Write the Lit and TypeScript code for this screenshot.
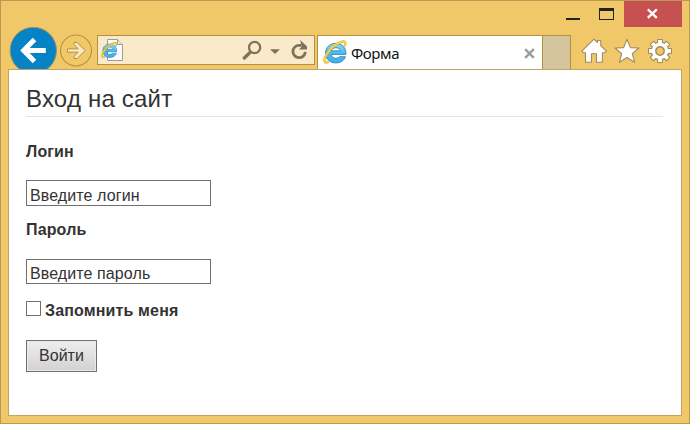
import { LitElement, html, css, svg } from "lit";
import { customElement } from "lit/decorators.js";

const ieGlyph = svg`
  <defs>
    <linearGradient id="e" x1="0" y1="0" x2="0" y2="1">
      <stop offset="0" stop-color="#8edcfb"/>
      <stop offset=".5" stop-color="#4fb9ea"/>
      <stop offset="1" stop-color="#45aee6"/>
    </linearGradient>
  </defs>
  <path fill-rule="evenodd" fill="url(#e)" stroke="#2482bb" stroke-width=".8"
    d="M22 13.800H8.100c.2 2.400 1.800 3.700 4.100 3.700 1.700 0 2.900-.5 3.600-1.500h5.700c-1.400 3.800-4.600 6-9.200 6C6.500 22 2.500 18.200 2.500 12.600S6.500 3.200 12.200 3.200c6 0 10 4.200 9.800 10.600zM8.200 10.400h8.200c-.3-1.900-1.800-3-4.100-3s-3.800 1.100-4.100 3z"/>
  <path fill="none" stroke="#e9a912" stroke-width="2.300" stroke-linecap="round"
    d="M4.500 21.300C1.300 22.600.4 19.400 2.800 15 6.200 9 12.500 3.800 17.500 1.900c3.500-1.300 4.600.3 3.500 3.300"/>
  <path fill="none" stroke="#fdd755" stroke-width="1.300" stroke-linecap="round"
    d="M4.500 21.300C1.300 22.600.4 19.400 2.800 15 6.200 9 12.500 3.800 17.500 1.900c3.500-1.300 4.600.3 3.500 3.300"/>`;

const gearTeeth = [0, 45, 90, 135];

@customElement("browser-toolbar")
export class BrowserToolbar extends LitElement {
  static styles = css`
    :host { display: block; height: 68px; color: #111; }
    svg { display: block; flex: none; }
    .title { display: flex; justify-content: flex-end; height: 26px; }
    .caption { width: 96px; }
    .close { width: 58px; background: #c75050; margin-right: 7px; }
    .nav { display: flex; align-items: flex-start; height: 42px; padding-left: 8px; }
    .address {
      box-sizing: border-box; display: flex; align-items: flex-start;
      width: 218px; height: 30px; margin: 8px 2px 0 3px;
      border: 1px solid #b3923f; background: #faeaca;
    }
    .page { margin: 2px 0 0 2px; }
    .tools { margin-left: auto; }
    .tab {
      box-sizing: border-box; display: flex; width: 226px; height: 34px; margin-top: 8px;
      border: 1px solid #b3923f; border-bottom: 0; background: #fff;
      font: 15px/34px "Noto Sans", "Open Sans", sans-serif;
    }
    .logo { margin: 4px 3px 0 5px; }
    .name { margin-left: 1px; letter-spacing: -0.4px; }
    .x { margin: 12px 7px 0 auto; }
    .newtab {
      box-sizing: border-box; width: 28px; height: 34px; margin-top: 8px;
      border: 1px solid #b3923f; border-width: 1px 1px 0 0; background: #d5c59e;
    }
    .actions { margin: 10px 0 0 9px; }
  `;
  render() {
    return html`
      <div class="title">
        <svg class="caption" height="26" viewBox="528 1 96 26">
          <path fill="#222" d="M566 18h14v2h-14z"/>
          <path fill="#222" fill-rule="evenodd" d="M599 8h15v12h-15zM600 11v8h13v-8z"/>
        </svg>
        <svg class="close" height="26" viewBox="624 1 58 26">
          <path d="M647.800 9.300l9 8.600M656.800 9.300l-9 8.600" stroke="#fff" stroke-width="2.300"/>
        </svg>
      </div>
      <div class="nav">
        <svg width="85" height="42" viewBox="9 27 85 42">
          <circle cx="33.300" cy="50.500" r="23.200" fill="#0583c5" stroke="#a5915c"/>
          <path d="M45.800 50.500H24M34.500 39.500L23.700 50.500l10.800 11" fill="none" stroke="#fff" stroke-width="5"/>
          <circle cx="76" cy="50.500" r="15.500" fill="none" stroke="#b3923f" stroke-width="1.100"/>
          <path d="M67.500 48.800h10.800l-4.300-4.200V42.500h3.100l8 8-8 8H74v-2.100l4.300-4.200H67.500z" fill="#fbe9c2" stroke="#b3923f"/>
        </svg>
        <div class="address">
          <svg class="page" width="24" height="24" viewBox="100 38 24 24">
            <path d="M107.500 39.500h10l5 5v16h-15z" fill="#fbfbfd" stroke="#9b9b9b"/>
            <path d="M117.500 39.500v5h5" fill="#e8e8e8" stroke="#9b9b9b"/>
            <svg x="101" y="41.500" width="16.500" height="17" viewBox="0 0 23 23">${ieGlyph}</svg>
          </svg>
          <svg class="tools" width="75" height="28" viewBox="239 36 75 28">
            <g fill="none" stroke="#7c735f">
              <circle cx="254.600" cy="47.500" r="5.600" stroke-width="2.300"/>
              <path d="M250.500 52l-7.200 7" stroke-width="3.200"/>
              <path d="M301.500 45.300h-2.500a6.200 6.200 0 1 0 6.300 6.600" stroke-width="2.800"/>
            </g>
            <path fill="#7c735f" d="M270 49.200h10l-5 4.800zM300.300 40l6.700 6.500v3h-8l2.500-2.800z"/>
          </svg>
        </div>
        <div class="tab">
          <svg class="logo" width="24" height="24" viewBox="0 0 23 23">${ieGlyph}</svg>
          <span class="name">Форма</span>
          <svg class="x" width="11" height="11" viewBox="0 0 11 11">
            <path d="M1.200 1.200l8.600 8.600M9.800 1.200L1.200 9.800" stroke="#9c9c9c" stroke-width="2.400"/>
          </svg>
        </div>
        <div class="newtab"></div>
        <svg class="actions" width="96" height="28" viewBox="580 37 96 28">
          <g fill="#fff" stroke="#a18c58" stroke-width="1.100" stroke-linejoin="round">
            <path d="M581.800 51.200L594 39.200l3.400 3.300v-2h3.400v5.400l5.700 5.300-1.600 1.500h-2.500v9.600h-6v-8.500h-4.900v8.500h-6v-9.600h-2.100z"/>
            <path d="M627 39.300l3.400 8.300 8.600.4-6.700 5.600 2.300 8.600-7.600-4.700-7.600 4.700 2.300-8.600-6.700-5.600 8.600-.4z"/>
          </g>
          <g transform="translate(660 51)">
            <circle r="9.200" fill="#a18c58"/>
            ${gearTeeth.map((a) => svg`<rect x="-2.900" y="-12" width="5.800" height="24" rx=".8" fill="#a18c58" transform="rotate(${a})"/>`)}
            <circle r="8.200" fill="#fff"/>
            ${gearTeeth.map((a) => svg`<rect x="-1.900" y="-11" width="3.800" height="22" fill="#fff" transform="rotate(${a})"/>`)}
            <circle r="4.200" fill="#f0c869" stroke="#a18c58" stroke-width="1.400"/>
          </g>
        </svg>
      </div>`;
  }
}

@customElement("login-form")
export class LoginForm extends LitElement {
  static styles = css`
    :host { display: block; padding: 0 18px 0 17px; font: 16px/20px "Liberation Sans", Arial, sans-serif; color: #333; }
    h1 {
      box-sizing: border-box; height: 47px; margin: 0 0 25px; padding-top: 14px;
      border-bottom: 1px solid #e5e5e5; font-size: 24px; line-height: 30px; font-weight: 400; letter-spacing: 0.2px;
    }
    label { display: block; font-weight: 700; letter-spacing: 0.15px; }
    input[type="text"] {
      box-sizing: border-box; display: block; width: 185px; height: 26px; margin: 18px 0 14px;
      padding: 5px 3px 0; border: 1px solid #707070; border-radius: 0; outline: 0;
      background: #fff; color: #333; font: inherit; line-height: 18px; letter-spacing: 0.1px;
    }
    input.password { height: 25px; margin: 19px 0 16px; }
    .remember { display: flex; align-items: flex-start; gap: 4px; }
    .remember span { padding-top: 1px; }
    .remember input {
      appearance: none; box-sizing: border-box; width: 15px; height: 15px; margin: 1px 0 0;
      border: 1px solid #707070; background: #fff;
    }
    button {
      box-sizing: border-box; display: block; width: 71px; height: 32px; margin-top: 19px; padding: 0;
      border: 1px solid #707070; border-radius: 0; box-shadow: inset 0 0 0 1px #e9e9e9;
      background: linear-gradient(#eee, #d2d2d2); color: #333; font: inherit;
    }
  `;
  render() {
    return html`
      <h1>Вход на сайт</h1>
      <label for="login">Логин</label>
      <input id="login" type="text" value="Введите логин" />
      <label for="password">Пароль</label>
      <input id="password" class="password" type="text" value="Введите пароль" />
      <label class="remember"><input type="checkbox" /><span>Запомнить меня</span></label>
      <button>Войти</button>`;
  }
}

@customElement("app-root")
export class AppRoot extends LitElement {
  static styles = css`
    :host {
      box-sizing: border-box; display: flex; flex-direction: column; width: 690px; height: 424px;
      border: 1px solid #b89b52; background: #f0c869; overflow: hidden;
    }
    .viewport {
      box-sizing: border-box; flex: none; width: 674px; height: 347px; margin-left: 7px;
      border: 1px solid #bfa469; background: #fff;
    }
  `;
  render() {
    return html`
      <browser-toolbar></browser-toolbar>
      <div class="viewport"><login-form></login-form></div>`;
  }
}
